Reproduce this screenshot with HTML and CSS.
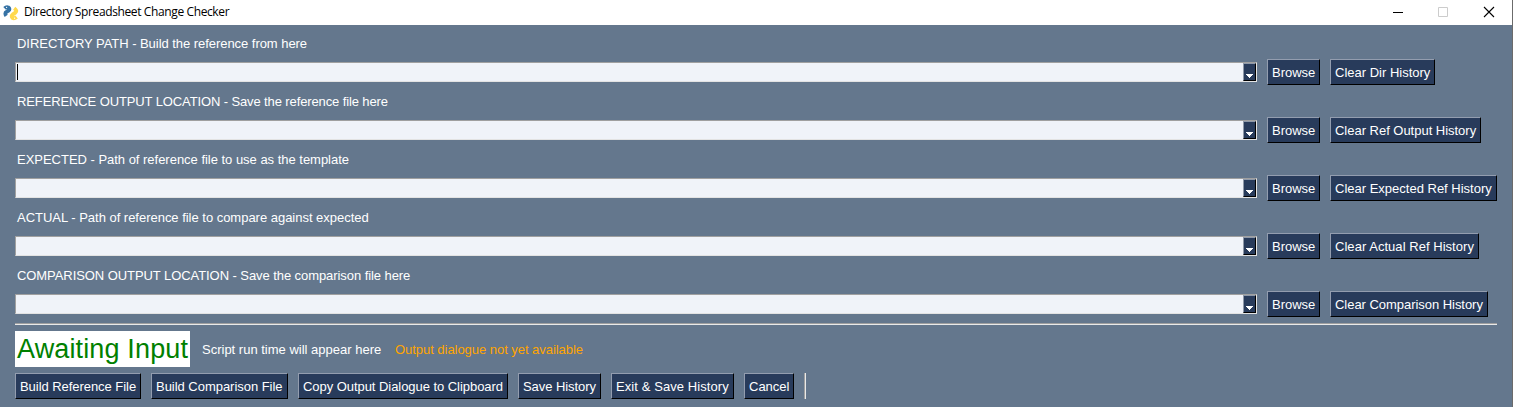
FILE: index.html
```html
<!DOCTYPE html>
<html lang="en">
<head>
<meta charset="utf-8">
<title>Directory Spreadsheet Change Checker</title>
<link rel="stylesheet" href="styles.css">
</head>
<body>
<div class="window">
  <header class="titlebar">
    <svg class="logo" width="16" height="16" viewBox="0 0 16 16" fill="none">
      <path stroke="#3673a5" stroke-width="3.8" stroke-linejoin="round" d="M1.6 3.4Q3.4 1.6 5.2 2.4Q7.4 4 5.6 5.6L3.4 7Q1.4 8.2 3.2 10.8"/>
      <path stroke="#ffd94c" stroke-width="3.8" stroke-linejoin="round" d="M11.2 3.2Q14.6 5.6 12.4 7.6L9.8 9.4Q7.8 11 9.4 12.8Q11.2 14 13.6 12"/>
      <circle cx="3.6" cy="2.4" r=".6" fill="#fff"/>
      <circle cx="11.6" cy="13.2" r=".6" fill="#fff"/>
    </svg>
    <span class="title">Directory Spreadsheet Change Checker</span>
    <svg class="controls" width="102" height="12" viewBox="0 0 102 12" fill="none">
      <path stroke="#000" d="M0 6.5H10"/>
      <path stroke="#ccc" d="M45.5 1.5H54.5V10.5H45.5z"/>
      <path stroke="#000" stroke-width="1.1" d="M91 1L101 11M101 1L91 11"/>
    </svg>
  </header>
  <main class="content">
    <div class="label l-dir">DIRECTORY PATH - Build the reference from here</div>
    <div class="row">
      <div class="combo"><span class="field"><i class="caret"></i></span><span class="drop"><svg width="7" height="4" viewBox="0 0 7 4"><path fill="#fff" d="M0 0H7V1H6V2H5V3H4V4H3V3H2V2H1V1H0z"/></svg></span></div>
      <button class="btn b-browse">Browse</button><button class="btn b-dir">Clear Dir History</button>
    </div>
    <div class="label l-ref">REFERENCE OUTPUT LOCATION - Save the reference file here</div>
    <div class="row">
      <div class="combo"><span class="field"></span><span class="drop"><svg width="7" height="4" viewBox="0 0 7 4"><path fill="#fff" d="M0 0H7V1H6V2H5V3H4V4H3V3H2V2H1V1H0z"/></svg></span></div>
      <button class="btn b-browse">Browse</button><button class="btn b-ref">Clear Ref Output History</button>
    </div>
    <div class="label l-exp">EXPECTED - Path of reference file to use as the template</div>
    <div class="row">
      <div class="combo"><span class="field"></span><span class="drop"><svg width="7" height="4" viewBox="0 0 7 4"><path fill="#fff" d="M0 0H7V1H6V2H5V3H4V4H3V3H2V2H1V1H0z"/></svg></span></div>
      <button class="btn b-browse">Browse</button><button class="btn b-exp">Clear Expected Ref History</button>
    </div>
    <div class="label l-exp">ACTUAL - Path of reference file to compare against expected</div>
    <div class="row">
      <div class="combo"><span class="field"></span><span class="drop"><svg width="7" height="4" viewBox="0 0 7 4"><path fill="#fff" d="M0 0H7V1H6V2H5V3H4V4H3V3H2V2H1V1H0z"/></svg></span></div>
      <button class="btn b-browse">Browse</button><button class="btn b-act">Clear Actual Ref History</button>
    </div>
    <div class="label l-comp">COMPARISON OUTPUT LOCATION - Save the comparison file here</div>
    <div class="row">
      <div class="combo"><span class="field"></span><span class="drop"><svg width="7" height="4" viewBox="0 0 7 4"><path fill="#fff" d="M0 0H7V1H6V2H5V3H4V4H3V3H2V2H1V1H0z"/></svg></span></div>
      <button class="btn b-browse">Browse</button><button class="btn b-comp">Clear Comparison History</button>
    </div>
    <div class="rule"></div>
    <div class="status">
      <span class="state">Awaiting Input</span>
      <span class="runtime">Script run time will appear here</span>
      <span class="dialogue">Output dialogue not yet available</span>
    </div>
    <div class="actions">
      <button class="btn b-build">Build Reference File</button>
      <button class="btn b-buildcomp">Build Comparison File</button>
      <button class="btn b-copy">Copy Output Dialogue to Clipboard</button>
      <button class="btn b-save">Save History</button>
      <button class="btn b-exit">Exit &amp; Save History</button>
      <button class="btn b-cancel">Cancel</button>
      <span class="vrule"></span>
    </div>
  </main>
</div>
</body>
</html>
```
FILE: styles.css
```css
* { box-sizing: border-box; }
body { margin: 0; font-family: "Liberation Sans", Arial, sans-serif; font-size: 13px; }
.window { width: 1513px; height: 407px; background: #64778d; border-right: 1px solid #6b6b6b; overflow: hidden; }
.titlebar { display: flex; align-items: center; height: 25px; padding: 0 17px 0 3px; background: #fff; }
.logo { margin-right: 5px; }
.title { flex: 1; height: 25px; font: 12px/23px "Open Sans", "Noto Sans", sans-serif; letter-spacing: -0.38px; color: #000; white-space: nowrap; }
.controls { margin-bottom: 1px; }
.content { padding: 8px 15px 0; }
.label { height: 20px; padding-left: 2px; line-height: 21px; color: #fff; white-space: nowrap; }
.l-dir { letter-spacing: -0.045px; }
.l-ref { letter-spacing: -0.115px; }
.l-exp { letter-spacing: -0.02px; }
.l-comp { letter-spacing: -0.07px; }
.row { display: flex; align-items: center; gap: 10px; height: 26px; margin: 6px 0; }
.combo { display: flex; width: 1242px; height: 20px; background: #f0f3f9; border: 1px solid; border-color: #a0a0a0 #e3e3e3 #e3e3e3 #a0a0a0; }
.field { flex: 1; padding: 1px; }
.caret { display: block; width: 1px; height: 16px; background: #000; }
.drop { display: flex; justify-content: center; align-items: flex-end; width: 13px; padding-bottom: 2px; background: #283b5b; border: 1px solid; border-color: #8f99a9 #000 #000 #8f99a9; }
.btn { height: 26px; margin: 0; padding: 2px 0 0 4px; background: #283b5b; color: #fff; border: 1px solid; border-color: #939daf #000 #000 #939daf; border-radius: 0; font: inherit; line-height: 22px; text-align: left; white-space: nowrap; }
.b-browse { width: 53px; }
.b-dir { width: 105px; }
.b-ref { width: 151px; letter-spacing: -0.02px; }
.b-exp { width: 167px; }
.b-act { width: 149px; letter-spacing: 0.04px; }
.b-comp { width: 158px; letter-spacing: -0.04px; }
.rule { height: 2px; margin-top: 6px; background: #e9e9e9; border-top: 1px solid #a0a0a0; }
.status { display: flex; align-items: center; height: 36px; margin-top: 6px; color: #fff; white-space: nowrap; }
.state { width: 175px; height: 36px; margin-right: 12px; padding-left: 2px; background: #fff; color: #008000; font-size: 27px; line-height: 37px; letter-spacing: 0.14px; }
.runtime { width: 193px; }
.dialogue { color: #ffa500; letter-spacing: -0.04px; }
.actions { display: flex; gap: 10px; margin-top: 6px; }
.b-build { width: 126px; letter-spacing: -0.05px; }
.b-buildcomp { width: 137px; letter-spacing: -0.03px; }
.b-copy { width: 210px; letter-spacing: -0.05px; }
.b-save { width: 83px; letter-spacing: -0.06px; }
.b-exit { width: 123px; letter-spacing: 0.08px; }
.b-cancel { width: 50px; }
.vrule { width: 2px; height: 26px; background: #e9e9e9; border-left: 1px solid #a0a0a0; }
```
